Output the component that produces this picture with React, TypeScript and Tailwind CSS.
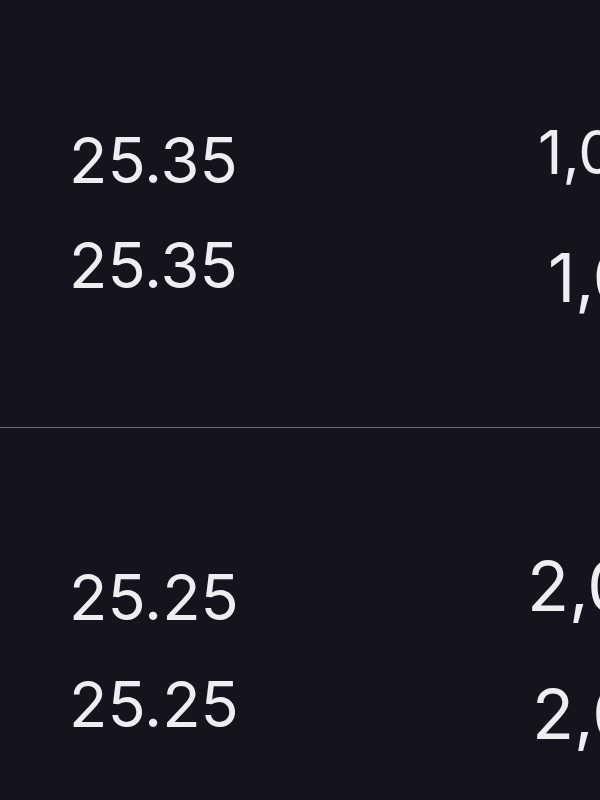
const rows = [
  { price: '25.35', size: '1,000', leftTop: 'mt-[7px]', rightTop: 'mt-0', rightLeft: 'ml-[269px]', rightSize: 'text-[60px]' },
  { price: '25.35', size: '1,000', leftTop: 'mt-0', rightTop: 'mt-[10px]', rightLeft: 'ml-[279px]', rightSize: 'text-[67px]' },
]

const rows2 = [
  { price: '25.25', size: '2,000', leftTop: 'mt-[14px]', rightTop: 'mt-0', rightLeft: 'ml-[258px]', rightSize: 'text-[69px]' },
  { price: '25.25', size: '2,000', leftTop: 'mt-0', rightTop: 'mt-[7px]', rightLeft: 'ml-[263px]', rightSize: 'text-[69px]' },
]

type Row = (typeof rows)[number]

function BookRow({ row }: { row: Row }) {
  return (
    <div className="flex items-start whitespace-nowrap pl-[69px] leading-none">
      <span className={`w-[200px] shrink-0 text-[63px] ${row.leftTop}`}>{row.price}</span>
      <span className={`shrink-0 ${row.rightSize} ${row.rightTop} ${row.rightLeft}`}>{row.size}</span>
    </div>
  )
}

export default function App() {
  return (
    <div
      className="w-[600px] h-[800px] overflow-hidden bg-[#14141f] text-[#eeeef2]"
      style={{ fontFamily: 'Inter, "Noto Sans", sans-serif' }}
    >
      <div className="h-[427px] pt-[122px] flex flex-col gap-[42px]">
        {rows.map((r, i) => (
          <BookRow key={i} row={r} />
        ))}
      </div>
      <div className="h-px bg-[#6b6b78]" />
      <div className="pt-[124px] flex flex-col gap-[44px]">
        {rows2.map((r, i) => (
          <BookRow key={i} row={r} />
        ))}
      </div>
    </div>
  )
}
